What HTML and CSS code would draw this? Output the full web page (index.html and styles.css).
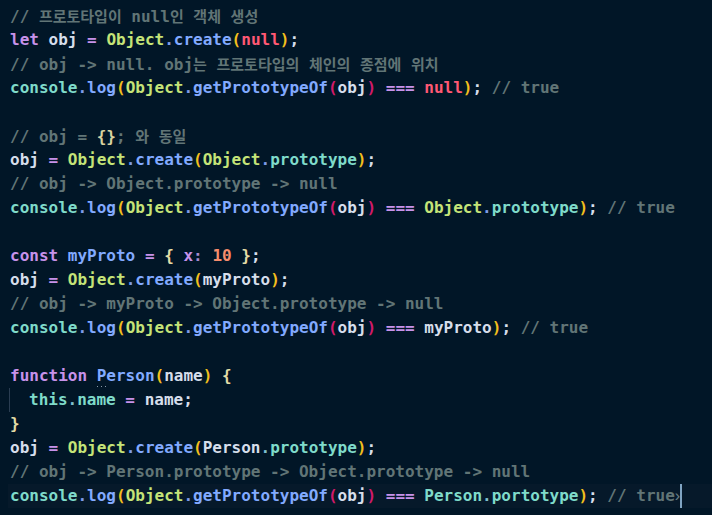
FILE: index.html
```html
<!DOCTYPE html>
<html lang="ko">
<head>
<meta charset="utf-8">
<link rel="stylesheet" href="styles.css">
</head>
<body>
<div class="editor">
<div class="line"><span class="c">// <span class="ko">프로토타입이</span> null<span class="ko">인</span> <span class="ko">객체</span> <span class="ko">생성</span></span></div>
<div class="line"><span class="kw">let</span> <span class="v">obj</span> <span class="op">=</span> <span class="cls">Object</span><span class="dot">.</span><span class="fn">create</span><span class="p1">(</span><span class="nl">null</span><span class="p1">)</span><span class="v">;</span></div>
<div class="line"><span class="c">// obj -&gt; null. obj<span class="ko">는</span> <span class="ko">프로토타입의</span> <span class="ko">체인의</span> <span class="ko">종점에</span> <span class="ko">위치</span></span></div>
<div class="line"><span class="cn">console</span><span class="dot">.</span><span class="fn">log</span><span class="p1">(</span><span class="cls">Object</span><span class="dot">.</span><span class="fn">getPrototypeOf</span><span class="p2">(</span><span class="v">obj</span><span class="p2">)</span> <span class="op">===</span> <span class="nl">null</span><span class="p1">)</span><span class="v">;</span> <span class="c">// true</span></div>
<div class="line"></div>
<div class="line"><span class="c">// obj = <span class="br">{}</span>; <span class="ko">와</span> <span class="ko">동일</span></span></div>
<div class="line"><span class="v">obj</span> <span class="op">=</span> <span class="cls">Object</span><span class="dot">.</span><span class="fn">create</span><span class="p1">(</span><span class="cls">Object</span><span class="dot">.</span><span class="cn">prototype</span><span class="p1">)</span><span class="v">;</span></div>
<div class="line"><span class="c">// obj -&gt; Object.prototype -&gt; null</span></div>
<div class="line"><span class="cn">console</span><span class="dot">.</span><span class="fn">log</span><span class="p1">(</span><span class="cls">Object</span><span class="dot">.</span><span class="fn">getPrototypeOf</span><span class="p2">(</span><span class="v">obj</span><span class="p2">)</span> <span class="op">===</span> <span class="cls">Object</span><span class="dot">.</span><span class="cn">prototype</span><span class="p1">)</span><span class="v">;</span> <span class="c">// true</span></div>
<div class="line"></div>
<div class="line"><span class="kw">const</span> <span class="fn">myProto</span> <span class="op">=</span> <span class="br">{</span> <span class="kw">x</span><span class="col">:</span> <span class="num">10</span> <span class="br">}</span><span class="v">;</span></div>
<div class="line"><span class="v">obj</span> <span class="op">=</span> <span class="cls">Object</span><span class="dot">.</span><span class="fn">create</span><span class="p1">(</span><span class="v">myProto</span><span class="p1">)</span><span class="v">;</span></div>
<div class="line"><span class="c">// obj -&gt; myProto -&gt; Object.prototype -&gt; null</span></div>
<div class="line"><span class="cn">console</span><span class="dot">.</span><span class="fn">log</span><span class="p1">(</span><span class="cls">Object</span><span class="dot">.</span><span class="fn">getPrototypeOf</span><span class="p2">(</span><span class="v">obj</span><span class="p2">)</span> <span class="op">===</span> <span class="v">myProto</span><span class="p1">)</span><span class="v">;</span> <span class="c">// true</span></div>
<div class="line"></div>
<div class="line"><span class="kw">function</span> <span class="fn"><span class="hint">P</span>erson</span><span class="p1">(</span><span class="v">name</span><span class="p1">)</span> <span class="br">{</span></div>
<div class="line indented"><span class="guide"></span><span class="cn">this</span><span class="dot2">.</span><span class="cn">name</span> <span class="op">=</span> <span class="v">name</span><span class="v">;</span></div>
<div class="line"><span class="br">}</span></div>
<div class="line"><span class="v">obj</span> <span class="op">=</span> <span class="cls">Object</span><span class="dot">.</span><span class="fn">create</span><span class="p1">(</span><span class="v">Person</span><span class="dot2">.</span><span class="cn">prototype</span><span class="p1">)</span><span class="v">;</span></div>
<div class="line"><span class="c">// obj -&gt; Person.prototype -&gt; Object.prototype -&gt; null</span></div>
<div class="line current"><span class="cn">console</span><span class="dot">.</span><span class="fn">log</span><span class="p1">(</span><span class="cls">Object</span><span class="dot">.</span><span class="fn">getPrototypeOf</span><span class="p2">(</span><span class="v">obj</span><span class="p2">)</span> <span class="op">===</span> <span class="cn">Person</span><span class="dot2">.</span><span class="cn">portotype</span><span class="p1">)</span><span class="v">;</span> <span class="c">// true</span><span class="chev">›</span><span class="cursor"></span></div>
</div>
</body>
</html>
```
FILE: styles.css
```css
html, body {
  margin: 0;
  padding: 0;
  background: #011627;
}
.editor {
  padding: 4px 0 0 0;
  font-family: "DejaVu Sans Mono", "Noto Sans CJK KR", monospace;
  font-size: 16px;
  font-weight: bold;
  color: #d6deeb;
  width: 712px;
  height: 511px;
  overflow: hidden;
}
.line {
  height: 24px;
  line-height: 24px;
  white-space: pre;
  padding-left: 10px;
  position: relative;
}
.line.current {
  margin-left: 8px;
  padding-left: 2px;
  background: #06192a;
}
.ko {
  font-family: "Noto Sans CJK KR", sans-serif;
  font-size: 15px;
  font-weight: bold;
  letter-spacing: 0;
}
.c { color: #617576; }
.kw { color: #c792ea; }
.op { color: #c792ea; }
.v { color: #d6deeb; }
.cls { color: #c5e478; }
.fn { color: #82aaff; }
.cn { color: #7fdbca; }
.dot { color: #7e9ce8; }
.dot2 { color: #7fc0d0; }
.nl { color: #ff5874; }
.num { color: #f78c6c; }
.col { color: #a58bd0; }
.p1 { color: #f2bf1d; }
.p2 { color: #d11a6a; }
.br { color: #e3dca6; }
.c .br { color: #d8d2a0; }
.hint { position: relative; }
.hint::after {
  content: "";
  position: absolute;
  left: 0;
  top: 20px;
  width: 9px;
  height: 1px;
  background: repeating-linear-gradient(90deg, #8a9aa8 0 1px, transparent 1px 4px);
}
.guide {
  position: absolute;
  left: 9px;
  top: 0;
  width: 1px;
  height: 24px;
  background: #2a3d52;
}
.indented { padding-left: 29px; }
.chev {
  font-family: "Liberation Sans", sans-serif;
  font-weight: normal;
  color: #6a7f86;
}
.cursor {
  display: inline-block;
  width: 2px;
  height: 24px;
  vertical-align: top;
  background: #80a4c2;
}
```
